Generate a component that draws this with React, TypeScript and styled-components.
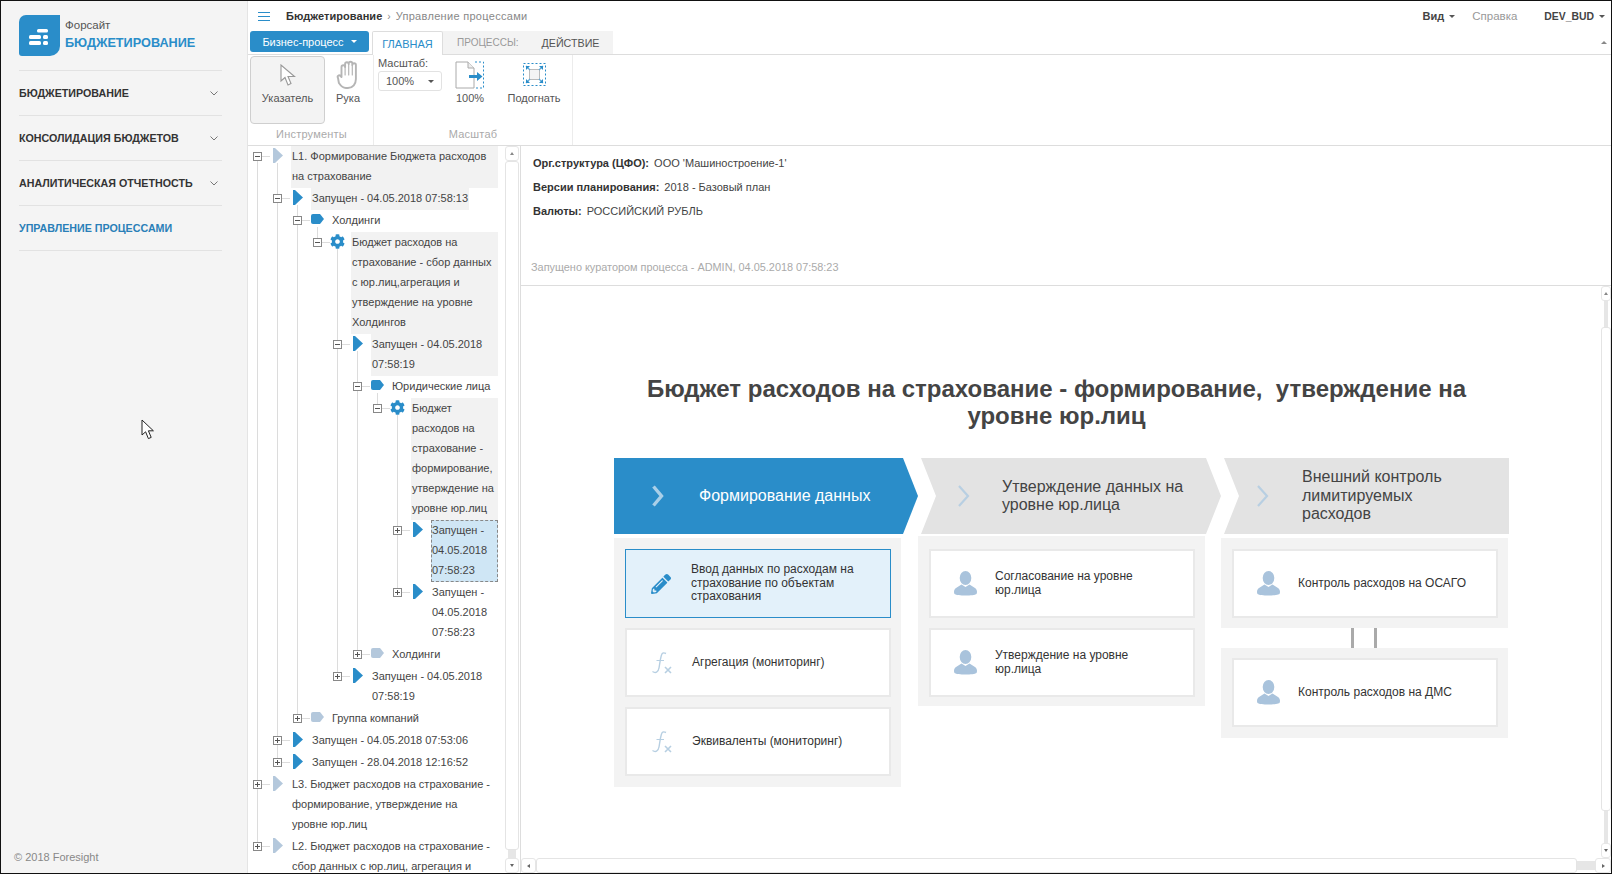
import React from "react";
import styled, { createGlobalStyle } from "styled-components";
import { FaCog, FaPencilAlt } from "react-icons/fa";

const Global = createGlobalStyle`
  html, body { margin: 0; padding: 0; height: 100%; overflow: hidden; background: #fff; }
  body { font-family: "Liberation Sans", Arial, sans-serif; font-size: 11px; color: #444; }
  ul { list-style: none; margin: 0; padding: 0; }
`;

const BLUE = "#2a8dc9";
const LINE = "#dcdcdc";

const Frame = styled.div`
  width: 1612px; height: 874px; box-sizing: border-box;
  border: 1px solid #111; display: flex; overflow: hidden;
`;
/* ---------- sidebar ---------- */
const Sidebar = styled.aside`
  width: 246px; flex: none; background: #f4f4f4; border-right: 1px solid #e4e4e4;
  display: flex; flex-direction: column; position: relative;
`;
const Brand = styled.div`
  display: flex; align-items: flex-start; gap: 5px; padding: 14px 0 0 18px; height: 55px; box-sizing: content-box; 
`;
const BrandText = styled.div`display: flex; flex-direction: column; padding-top: 3px;`;
const BrandSmall = styled.span`font-size: 11.5px; line-height: 14px; color: #555;`;
const BrandBig = styled.span`font-size: 12.7px; line-height: 20px; margin-top: 1px; font-weight: 700; color: ${BLUE};`;
const Nav = styled.nav`margin: 0 25px 0 18px; border-top: 1px solid #e2e2e2;`;
const NavItem = styled.div<{ $active?: boolean }>`
  height: 44px; border-bottom: 1px solid #e2e2e2; display: flex; align-items: center; justify-content: space-between;
  padding-right: 4px; font-size: 10.7px; font-weight: 700; white-space: nowrap; color: ${(p) => (p.$active ? "#2a7fb8" : "#333")};
`;
const Copy = styled.div`margin-top: auto; padding: 0 0 10px 13px; line-height: 12px; color: #888; font-size: 11px;`;
const CursorMark = styled.svg`position: absolute; left: 140px; top: 418px;`;

/* ---------- main ---------- */
const Main = styled.main`flex: 1; min-width: 0; display: flex; flex-direction: column;`;
const Topbar = styled.header`
  height: 30px; flex: none; display: flex; align-items: center; padding: 0 6px 0 10px; box-sizing: border-box;
`;
const Burger = styled.span`
  width: 12px; height: 7px; border-top: 1px solid ${BLUE}; border-bottom: 1px solid ${BLUE}; position: relative; margin-right: 16px;
  &::after { content: ""; position: absolute; left: 0; right: 0; top: 3px; height: 1px; background: ${BLUE}; }
`;
const Crumb = styled.span`font-weight: 700; color: #333; letter-spacing: 0.05px;`;
const CrumbSep = styled.span`margin: 0 5px; color: #888; font-size: 10px;`;
const CrumbSub = styled.span`color: #888; letter-spacing: 0.3px;`;
const TopRight = styled.div`margin-left: auto; display: flex; align-items: center;`;
const TopMenu = styled.span<{ $small?: boolean }>`
  font-weight: 700; color: #444; display: inline-flex; align-items: center; gap: 5px; font-size: ${(p) => (p.$small ? "10.4px" : "11px")};
`;
const TopHelp = styled.span`color: #999; margin: 0 27px 0 17px; font-size: 11.5px;`;
const Caret = styled.i<{ $color?: string }>`
  display: inline-block; width: 0; height: 0; border: 3px solid transparent; border-top: 3px solid ${(p) => p.$color || "#555"}; border-bottom: 0;
`;
const TabsRow = styled.div`
  height: 23px; flex: none; border-bottom: 1px solid #ddd; display: flex; align-items: flex-start; padding-left: 2px; position: relative; box-sizing: content-box;
`;
const PrimaryButton = styled.div`
  width: 119px; height: 21px; box-sizing: border-box; background: ${BLUE}; border-radius: 3px; color: #fff; display: flex; align-items: center; justify-content: center; gap: 7px; margin-top: 0;
`;
const ActiveTab = styled.div`
  margin-left: 3px; width: 71px; height: 24px; box-sizing: border-box; background: #fff; border: 1px solid #ddd; border-bottom: 0; color: ${BLUE};
  display: flex; align-items: center; justify-content: center; position: relative; z-index: 1; border-radius: 2px 2px 0 0;
`;
const GreyTabs = styled.div`
  width: 170px; height: 23px; margin-top: 0; background: #f3f3f3; display: flex; align-items: center; padding-left: 14px; box-sizing: border-box; gap: 23px;
`;
const GreyTab = styled.span<{ $dim?: boolean }>`color: ${(p) => (p.$dim ? "#999" : "#555")}; font-size: ${(p) => (p.$dim ? "10px" : "10.7px")};`;
const Collapse = styled.i`
  margin: 10px 4px 0 auto; width: 0; height: 0; border: 3px solid transparent; border-bottom: 3px solid #888; border-top: 0;
`;
const Ribbon = styled.div`
  height: 90px; flex: none; border-bottom: 1px solid #ddd; display: flex; box-sizing: content-box; padding-left: 2px;
`;
const Group = styled.section<{ $w: number }>`
  width: ${(p) => p.$w}px; flex: none; border-right: 1px solid #ececec; display: flex; flex-direction: column; box-sizing: border-box;
`;
const Tools = styled.div`height: 69px; padding-top: 1px; display: flex;`;
const GroupLabel = styled.div`margin-top: 2px; text-align: center; color: #aaa; line-height: 14px; letter-spacing: 0.2px;`;
const Tool = styled.div<{ $w: number; $on?: boolean; $ml?: number }>`
  width: ${(p) => p.$w}px; height: 68px; margin-left: ${(p) => p.$ml || 0}px; box-sizing: border-box; border-radius: 4px; flex: none;
  border: 1px solid ${(p) => (p.$on ? "#cfcfcf" : "transparent")}; background: ${(p) => (p.$on ? "#f3f3f3" : "transparent")};
  display: flex; flex-direction: column; align-items: center; color: #555;
`;
const ToolIcon = styled.div`height: 31px; margin-top: 2px; display: flex; align-items: center; justify-content: center;`;
const ToolText = styled.span`margin-top: 1px; line-height: 14px;`;
const ZoomField = styled.div`width: 64px; margin: 0 12px 0 4px; flex: none; padding-top: 1px; color: #555; line-height: 13px;`;
const ZoomSelect = styled.div`
  margin-top: 1px; height: 20px; box-sizing: border-box; border: 1px solid #e2e2e2; border-radius: 3px; display: flex; align-items: center; justify-content: space-between; padding: 0 7px;
`;

const Body = styled.div`flex: 1; min-height: 0; display: flex;`;
const TreePane = styled.div`width: 257px; flex: none; overflow: hidden; padding: 0 7px 0 5px; box-sizing: border-box; color: #444;`;

const Node = styled.li<{ $level: number }>`
  position: relative;
  &::before {
    content: ""; position: absolute; left: 4px; top: 0; bottom: 0; width: 1px; background: ${LINE};
  }
  &:last-child::before { bottom: auto; height: 11px; }
  ${(p) => p.$level === 0 && `&:first-child::before { top: 14px; }`}
`;
const Kids = styled.ul`padding-left: 20px;`;
const Row = styled.div<{ $open?: boolean }>`
  display: flex; align-items: flex-start; position: relative;
  ${(p) => p.$open && `&::after { content: ""; position: absolute; left: 24px; top: 17px; bottom: 0; width: 1px; background: ${LINE}; }`}
`;
const Expander = styled.span<{ $open?: boolean }>`
  width: 9px; height: 9px; flex: none; box-sizing: border-box; margin-top: 6px; border: 1px solid #888; background:
    linear-gradient(#555, #555) center / 5px 1px no-repeat ${(p) => (p.$open ? "" : ", linear-gradient(#555, #555) center / 1px 5px no-repeat")}, #fff;
  position: relative; z-index: 1;
`;
const Tick = styled.span`width: 8px; height: 1px; flex: none; margin-top: 10px; background: ${LINE};`;
const IconSlot = styled.span`width: 15px; height: 16px; flex: none; margin: 1px 6px 0 0; display: flex; align-items: center; justify-content: center;`;
const Label = styled.div<{ $tone: string; $wide?: boolean }>`
  flex: ${(p) => (p.$wide ? "1" : "0 1 auto")}; white-space: pre-line; line-height: 20px; box-sizing: border-box;
  padding: 0 1px 2px;
  background: ${(p) => (p.$tone === "grey" ? "#f2f2f2" : p.$tone === "selected" ? "#cfe6f5" : "transparent")};
  outline: ${(p) => (p.$tone === "selected" ? "1px dashed #888" : "0")};
  outline-offset: -1px;
`;

const ScrollV = styled.div<{ $w: number }>`width: ${(p) => p.$w}px; flex: none; display: flex; flex-direction: column;`;
const ScrollBtn = styled.div<{ $h?: number }>`
  height: ${(p) => p.$h || 15}px; flex: none; box-sizing: border-box; border: 1px solid #e6e6e6; border-radius: 3px; background: #fff; display: flex; align-items: center; justify-content: center;
`;
const Thumb = styled.div`flex: 1; border: 1px solid #e4e4e4; border-radius: 3px; background: #fff;`;
const Strip = styled.div<{ $h: number }>`height: ${(p) => p.$h}px; flex: none; background: #e6e6e6; margin: 0 3px;`;
const TriUp = styled.i`width: 0; height: 0; border: 2.5px solid transparent; border-bottom: 3px solid #888; border-top: 0;`;
const TriDown = styled.i`width: 0; height: 0; border: 2.5px solid transparent; border-top: 3px solid #666; border-bottom: 0;`;
const TriLeft = styled.i`width: 0; height: 0; border: 2.5px solid transparent; border-right: 3px solid #666; border-left: 0;`;
const TriRight = styled.i`width: 0; height: 0; border: 2.5px solid transparent; border-left: 3px solid #666; border-right: 0;`;

const Content = styled.div`flex: 1; min-width: 0; margin-left: 1px; border-left: 1px solid #ddd; display: flex; flex-direction: column;`;
const Info = styled.div`height: 139px; flex: none; box-sizing: content-box; border-bottom: 1px solid #ddd; padding-left: 12px;`;
const InfoRow = styled.div`height: 24px; line-height: 24px; color: #444;`;
const InfoList = styled.div`padding-top: 5px;`;
const InfoKey = styled.b`color: #333; margin-right: 2px;`;
const InfoNote = styled.div`margin: 37px 0 0 -2px; color: #aaa; line-height: 14px; font-size: 10.9px;`;
const Stage = styled.div`flex: 1; min-height: 0; display: flex;`;
const Canvas = styled.div`flex: 1; min-width: 0; overflow: hidden;`;
const Title = styled.h1`
  margin: 89px 9px 29px 0; text-align: center; font-size: 24px; line-height: 27px; font-weight: 700; color: #444;
`;
const Columns = styled.div`display: flex; padding-left: 93px;`;
const Col = styled.div<{ $w: number; $ml: number }>`width: ${(p) => p.$w}px; margin-left: ${(p) => p.$ml}px; flex: none;`;
const Chevron = styled.div<{ $shape: string; $blue?: boolean; $pad: number; $gap: number }>`
  height: 76px; display: flex; align-items: center; box-sizing: border-box; padding-left: ${(p) => p.$pad}px;
  background: ${(p) => (p.$blue ? BLUE : "#e3e3e3")}; color: ${(p) => (p.$blue ? "#fff" : "#444")};
  clip-path: ${(p) => p.$shape}; font-size: 16px; line-height: 18.5px; white-space: pre-line;
  & > svg { margin-right: ${(p) => p.$gap}px; flex: none; }
`;
const Panel = styled.div<{ $ml: number; $mt: number; $pt: number; $pb: number }>`
  width: 287px; margin-left: ${(p) => p.$ml}px; margin-top: ${(p) => p.$mt}px; padding: ${(p) => p.$pt}px 10px ${(p) => p.$pb}px 11px;
  box-sizing: border-box; background: #f3f3f3; display: flex; flex-direction: column; gap: 10px;
`;
const Card = styled.div<{ $on?: boolean; $pad?: number }>`
  height: 69px; box-sizing: border-box; display: flex; align-items: center; padding-left: ${(p) => p.$pad || 23}px;
  background: ${(p) => (p.$on ? "#e3f1fa" : "#fff")}; border: ${(p) => (p.$on ? `1px solid ${BLUE}` : "2px solid #e9e9e9")};
  font-size: 12px; line-height: 13.6px; color: #333; white-space: pre-line;
`;
const CardIcon = styled.span`width: 24px; height: 26px; flex: none; margin-right: 18px; display: flex; align-items: center; justify-content: center;`;
const Bars = styled.div`height: 20px; display: flex; justify-content: center; gap: 20px; padding-right: 6px;`;
const Bar = styled.span`width: 3px; height: 100%; background: #aaa;`;
const ScrollH = styled.div`height: 15px; flex: none; display: flex; align-items: stretch;`;
const HBtn = styled.div<{ $w: number }>`
  width: ${(p) => p.$w}px; flex: none; box-sizing: border-box; border: 1px solid #e6e6e6; border-radius: 3px; display: flex; align-items: center; justify-content: center;
`;
const HThumb = styled.div`flex: 1; border: 1px solid #e4e4e4; border-radius: 3px;`;
const HStrip = styled.div`width: 18px; flex: none; background: #e6e6e6; margin: 3px 0;`;

/* ---------- drawings ---------- */
const LogoMark = () => (
  <svg width="41" height="41" viewBox="0 0 41 41">
    <path d="M7 0H41V31a10 10 0 0 1-10 10H3a3 3 0 0 1-3-3V7a7 7 0 0 1 7-7Z" fill={BLUE} />
    <g fill="#fff">
      <rect x="18" y="14" width="11" height="3.5" rx="1.5" />
      <rect x="10" y="20" width="12" height="4" rx="1.5" />
      <rect x="24" y="20" width="5" height="4" rx="1.5" />
      <rect x="10" y="26" width="12" height="4" rx="1.5" />
      <rect x="24" y="26" width="5" height="4" rx="1.5" />
    </g>
  </svg>
);
const NavChevron = () => (
  <svg width="8" height="5" viewBox="0 0 8 5"><path d="M.5.5 4 4 7.5.5" fill="none" stroke="#777" /></svg>
);
const PlayIcon = ({ muted }: { muted?: boolean }) => (
  <svg width="10" height="15" viewBox="0 0 10 15"><path d="M0 0H2L10 7.5 2 15H0Z" fill={muted ? "#b4c8dc" : BLUE} /></svg>
);
const TagIcon = ({ muted }: { muted?: boolean }) => (
  <svg width="13" height="10" viewBox="0 0 13 10"><path d="M2 0H9L13 5 9 10H2A2 2 0 0 1 0 8V2A2 2 0 0 1 2 0Z" fill={muted ? "#b4c8dc" : BLUE} /></svg>
);
const ArrowTool = () => (
  <svg width="16" height="22" viewBox="0 0 16 22"><path d="M1 1V17L5 13.5 8 21 11 19.5 8 12.5H14.5Z" fill="#fff" stroke="#999" strokeWidth="1.1" /></svg>
);
const HandTool = () => (
  <svg width="24" height="30" viewBox="0 0 24 30" fill="#fff" stroke="#b5b5b5" strokeWidth="1.9" strokeLinejoin="round" strokeLinecap="round">
    <path d="M5.5 17V7a1.8 1.8 0 0 1 3.6 0V4a1.8 1.8 0 0 1 3.6 0V3.5a1.8 1.8 0 0 1 3.6 0V5a1.8 1.8 0 0 1 3.6 0V19c0 5-3 9-8 9h-2c-3 0-5-2-7-5L2 18c-1.2-2 1-3.5 2.5-2l1 1Z" />
    <path d="M9.1 7V15M12.7 4V15M16.3 5V15" fill="none" strokeWidth="1.2" />
  </svg>
);
const DocTool = () => (
  <svg width="30" height="28" viewBox="0 0 30 28">
    <path d="M1 1H13L19 7V27H1Z" fill="#fff" stroke="#aaa" />
    <path d="M13 1V7H19" fill="#eee" stroke="#aaa" />
    <path d="M20 1H28.5V27H20" fill="none" stroke={BLUE} strokeDasharray="2 2" />
    <path d="M14 14H22V11L27.5 15.5 22 20V17H14Z" fill={BLUE} />
  </svg>
);
const FitTool = () => (
  <svg width="23" height="23" viewBox="0 0 23 23">
    <rect x=".5" y=".5" width="22" height="22" fill="none" stroke={BLUE} strokeDasharray="2 2" />
    <rect x="6.5" y="6.5" width="10" height="10" fill="#f4f4f4" stroke="#bbb" />
    <path d="M3 3 7 7M20 3 16 7M3 20 7 16M20 20 16 16" stroke="#5fa9d8" strokeWidth="1.2" />
    <path d="M3 3H7L3 7ZM20 3H16L20 7ZM3 20H7L3 16ZM20 20H16L20 16Z" fill={BLUE} />
  </svg>
);
const Chev = ({ color, thin }: { color: string; thin?: boolean }) => (
  <svg width="13" height="22" viewBox="0 0 13 22">
    <path d={thin ? "M2 1 11 11 2 21" : "M2.5 1.5 10.5 11 2.5 20.5"} fill="none" stroke={color} strokeWidth={thin ? 2.2 : 3.4} />
  </svg>
);
const FxIcon = () => (
  <svg width="22" height="24" viewBox="0 0 22 24" fill="none" stroke="#b7cfe2">
    <path d="M15 2.5C11 .5 10.5 3 9.5 8L8 17C7.2 21.5 4.5 22.5 1.5 20.5" strokeWidth="1.4" />
    <path d="M5.5 9.5H13" strokeWidth="1" />
    <path d="M14 16 20 22M20 16 14 22" strokeWidth="1.6" />
  </svg>
);
const PersonIcon = () => (
  <svg width="23" height="25" viewBox="0 0 23 25" fill="#a9c3dc">
    <ellipse cx="11.5" cy="7" rx="5.8" ry="7" />
    <path d="M7.5 13.5 11.5 16 15.5 13.5 21 17C23 18.5 23.5 21 22.5 23 20 25 3 25 .5 23-.5 21 0 18.5 2 17Z" />
  </svg>
);
const OsCursor = () => (
  <CursorMark width="14" height="21" viewBox="0 0 14 21">
    <path d="M1 1V16L4.6 12.8 7.4 19.6 10.2 18.4 7.4 11.8H12.4Z" fill="#fff" stroke="#222" />
  </CursorMark>
);

/* ---------- data ---------- */
type Kind = "play" | "playMuted" | "tag" | "tagMuted" | "gear";
type T = { kind: Kind; text: string; tone?: string; open?: boolean; kids?: T[] };

const tree: T[] = [
  {
    kind: "playMuted", text: "L1. Формирование Бюджета расходов\nна страхование", tone: "grey", open: true,
    kids: [
      {
        kind: "play", text: "Запущен - 04.05.2018 07:58:13", tone: "grey", open: true,
        kids: [
          {
            kind: "tag", text: "Холдинги", tone: "none", open: true,
            kids: [
              {
                kind: "gear", text: "Бюджет расходов на\nстрахование - сбор данных\nс юр.лиц,агрегация и\nутверждение на уровне\nХолдингов", tone: "grey", open: true,
                kids: [
                  {
                    kind: "play", text: "Запущен - 04.05.2018\n07:58:19", tone: "grey", open: true,
                    kids: [
                      {
                        kind: "tag", text: "Юридические лица", tone: "none", open: true,
                        kids: [
                          {
                            kind: "gear", text: "Бюджет\nрасходов на\nстрахование -\nформирование,\nутверждение на\nуровне юр.лиц", tone: "grey", open: true,
                            kids: [
                              { kind: "play", text: "Запущен -\n04.05.2018\n07:58:23", tone: "selected" },
                              { kind: "play", text: "Запущен -\n04.05.2018\n07:58:23" },
                            ],
                          },
                        ],
                      },
                      { kind: "tagMuted", text: "Холдинги" },
                    ],
                  },
                  { kind: "play", text: "Запущен - 04.05.2018\n07:58:19" },
                ],
              },
            ],
          },
          { kind: "tagMuted", text: "Группа компаний" },
        ],
      },
      { kind: "play", text: "Запущен - 04.05.2018 07:53:06" },
      { kind: "play", text: "Запущен - 28.04.2018 12:16:52" },
    ],
  },
  { kind: "playMuted", text: "L3. Бюджет расходов на страхование -\nформирование, утверждение на\nуровне юр.лиц" },
  { kind: "playMuted", text: "L2. Бюджет расходов на страхование -\nсбор данных с юр.лиц, агрегация и" },
];

const NodeIcon = ({ kind }: { kind: Kind }) => {
  if (kind === "play") return <PlayIcon />;
  if (kind === "playMuted") return <PlayIcon muted />;
  if (kind === "tag") return <TagIcon />;
  if (kind === "tagMuted") return <TagIcon muted />;
  return <FaCog size={15} color={BLUE} />;
};

const TreeList = ({ items, level }: { items: T[]; level: number }) => (
  <>
    {items.map((n, i) => (
      <Node key={i} $level={level}>
        <Row $open={n.open}>
          <Expander $open={n.open} />
          <Tick />
          <IconSlot><NodeIcon kind={n.kind} /></IconSlot>
          <Label $tone={n.tone || "none"} $wide={n.text.includes("\n")}>{n.text}</Label>
        </Row>
        {n.kids && <Kids><TreeList items={n.kids} level={level + 1} /></Kids>}
      </Node>
    ))}
  </>
);

export default function App() {
  return (
    <Frame>
      <Global />
      <Sidebar>
        <Brand>
          <LogoMark />
          <BrandText>
            <BrandSmall>Форсайт</BrandSmall>
            <BrandBig>БЮДЖЕТИРОВАНИЕ</BrandBig>
          </BrandText>
        </Brand>
        <Nav>
          <NavItem>БЮДЖЕТИРОВАНИЕ<NavChevron /></NavItem>
          <NavItem>КОНСОЛИДАЦИЯ БЮДЖЕТОВ<NavChevron /></NavItem>
          <NavItem>АНАЛИТИЧЕСКАЯ ОТЧЕТНОСТЬ<NavChevron /></NavItem>
          <NavItem $active>УПРАВЛЕНИЕ ПРОЦЕССАМИ</NavItem>
        </Nav>
        <Copy>© 2018 Foresight</Copy>
        <OsCursor />
      </Sidebar>
      <Main>
        <Topbar>
          <Burger />
          <Crumb>Бюджетирование</Crumb>
          <CrumbSep>›</CrumbSep>
          <CrumbSub>Управление процессами</CrumbSub>
          <TopRight>
            <TopMenu>Вид <Caret /></TopMenu>
            <TopHelp>Справка</TopHelp>
            <TopMenu $small>DEV_BUD <Caret /></TopMenu>
          </TopRight>
        </Topbar>
        <TabsRow>
          <PrimaryButton>Бизнес-процесс <Caret $color="#fff" /></PrimaryButton>
          <ActiveTab>ГЛАВНАЯ</ActiveTab>
          <GreyTabs>
            <GreyTab $dim>ПРОЦЕССЫ:</GreyTab>
            <GreyTab>ДЕЙСТВИЕ</GreyTab>
          </GreyTabs>
          <Collapse />
        </TabsRow>
        <Ribbon>
          <Group $w={124}>
            <Tools>
              <Tool $w={75} $on>
                <ToolIcon><ArrowTool /></ToolIcon>
                <ToolText>Указатель</ToolText>
              </Tool>
              <Tool $w={32} $ml={7}>
                <ToolIcon><HandTool /></ToolIcon>
                <ToolText>Рука</ToolText>
              </Tool>
            </Tools>
            <GroupLabel>Инструменты</GroupLabel>
          </Group>
          <Group $w={199}>
            <Tools>
              <ZoomField>
                Масштаб:
                <ZoomSelect>100% <Caret /></ZoomSelect>
              </ZoomField>
              <Tool $w={32}>
                <ToolIcon><DocTool /></ToolIcon>
                <ToolText>100%</ToolText>
              </Tool>
              <Tool $w={60} $ml={18}>
                <ToolIcon><FitTool /></ToolIcon>
                <ToolText>Подогнать</ToolText>
              </Tool>
            </Tools>
            <GroupLabel>Масштаб</GroupLabel>
          </Group>
        </Ribbon>
        <Body>
          <TreePane>
            <ul><TreeList items={tree} level={0} /></ul>
          </TreePane>
          <ScrollV $w={14}>
            <ScrollBtn><TriUp /></ScrollBtn>
            <Thumb />
            <Strip $h={8} />
            <ScrollBtn><TriDown /></ScrollBtn>
          </ScrollV>
          <Content>
            <Info>
              <InfoList>
                <InfoRow><InfoKey>Орг.структура (ЦФО):</InfoKey> ООО 'Машиностроение-1'</InfoRow>
                <InfoRow><InfoKey>Версии планирования:</InfoKey> 2018 - Базовый план</InfoRow>
                <InfoRow><InfoKey>Валюты:</InfoKey> РОССИЙСКИЙ РУБЛЬ</InfoRow>
              </InfoList>
              <InfoNote>Запущено куратором процесса - ADMIN, 04.05.2018 07:58:23</InfoNote>
            </Info>
            <Stage>
              <Canvas>
                <Title>Бюджет расходов на страхование - формирование,&nbsp; утверждение на<br />уровне юр.лиц</Title>
                <Columns>
                  <Col $w={304} $ml={0}>
                    <Chevron $blue $pad={37} $gap={35} $shape="polygon(0 0, 289px 0, 100% 50%, 289px 100%, 0 100%)">
                      <Chev color="#a9cfe8" />
                      <span>Формирование данных</span>
                    </Chevron>
                    <Panel $ml={0} $mt={4} $pt={11} $pb={11}>
                      <Card $on><CardIcon><FaPencilAlt size={20} color={BLUE} /></CardIcon>{"Ввод данных по расходам на\nстрахование по объектам\nстрахования"}</Card>
                      <Card><CardIcon><FxIcon /></CardIcon>Агрегация (мониторинг)</Card>
                      <Card><CardIcon><FxIcon /></CardIcon>Эквиваленты (мониторинг)</Card>
                    </Panel>
                  </Col>
                  <Col $w={300} $ml={3}>
                    <Chevron $pad={36} $gap={32} $shape="polygon(0 0, 285px 0, 100% 50%, 285px 100%, 0 100%, 15px 50%)">
                      <Chev color="#b8cfe2" thin />
                      <span>{"Утверждение данных на\nуровне юр.лица"}</span>
                    </Chevron>
                    <Panel $ml={-3} $mt={2} $pt={13} $pb={9}>
                      <Card $pad={22}><CardIcon><PersonIcon /></CardIcon>{"Согласование на уровне\nюр.лица"}</Card>
                      <Card $pad={22}><CardIcon><PersonIcon /></CardIcon>{"Утверждение на уровне\nюр.лица"}</Card>
                    </Panel>
                  </Col>
                  <Col $w={285} $ml={3}>
                    <Chevron $pad={32} $gap={33} $shape="polygon(0 0, 100% 0, 100% 100%, 0 100%, 15px 50%)">
                      <Chev color="#b8cfe2" thin />
                      <span>{"Внешний контроль\nлимитируемых\nрасходов"}</span>
                    </Chevron>
                    <Panel $ml={-3} $mt={4} $pt={11} $pb={10}>
                      <Card $pad={22}><CardIcon><PersonIcon /></CardIcon>Контроль расходов на ОСАГО</Card>
                    </Panel>
                    <Bars><Bar /><Bar /></Bars>
                    <Panel $ml={-3} $mt={0} $pt={10} $pb={11}>
                      <Card $pad={22}><CardIcon><PersonIcon /></CardIcon>Контроль расходов на ДМС</Card>
                    </Panel>
                  </Col>
                </Columns>
              </Canvas>
              <ScrollV $w={10}>
                <ScrollBtn><TriUp /></ScrollBtn>
                <Strip $h={26} />
                <Thumb />
                <Strip $h={32} />
                <ScrollBtn><TriDown /></ScrollBtn>
              </ScrollV>
            </Stage>
            <ScrollH>
              <HBtn $w={15}><TriLeft /></HBtn>
              <HThumb />
              <HStrip />
              <HBtn $w={16}><TriRight /></HBtn>
            </ScrollH>
          </Content>
        </Body>
      </Main>
    </Frame>
  );
}
